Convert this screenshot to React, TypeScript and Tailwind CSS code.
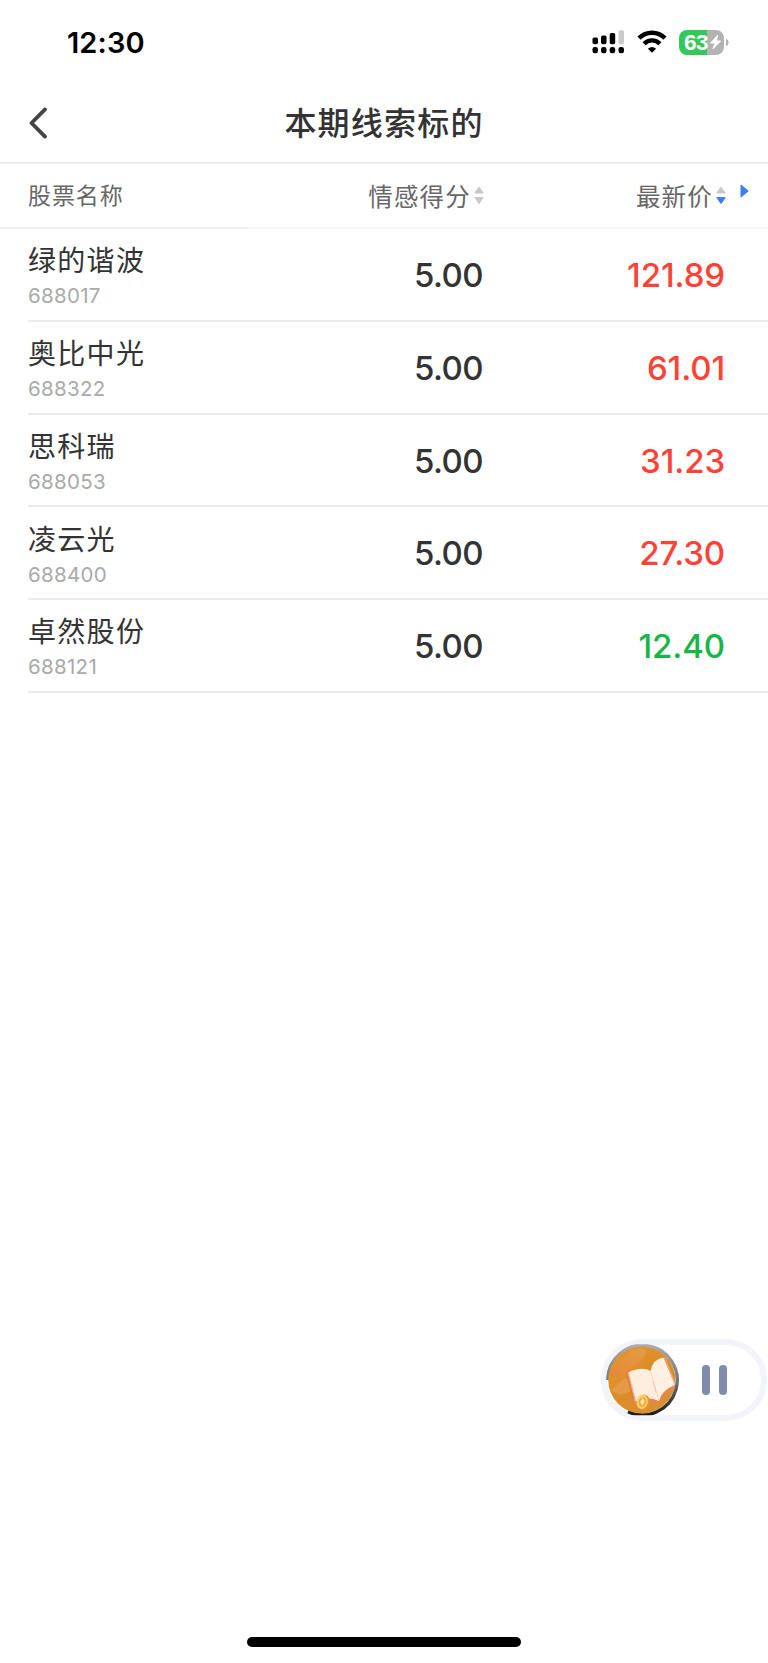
type Stock = { name: string; code: string; score: string; price: string; up: boolean };

const stocks: Stock[] = [
  { name: "绿的谐波", code: "688017", score: "5.00", price: "121.89", up: true },
  { name: "奥比中光", code: "688322", score: "5.00", price: "61.01", up: true },
  { name: "思科瑞", code: "688053", score: "5.00", price: "31.23", up: true },
  { name: "凌云光", code: "688400", score: "5.00", price: "27.30", up: true },
  { name: "卓然股份", code: "688121", score: "5.00", price: "12.40", up: false },
];

function SignalIcon() {
  return (
    <svg width="33" height="24" viewBox="0 0 33 24" className="block">
      <rect x="0.5" y="7.5" width="5.5" height="6.7" rx="1.8" />
      <rect x="9" y="5.5" width="5.5" height="8.7" rx="1.8" />
      <rect x="17.7" y="3" width="5.5" height="11.2" rx="1.8" />
      <rect x="26.5" y="0.3" width="5.5" height="13.9" rx="1.8" fill="#cbcbcb" />
      <rect x="0.5" y="17" width="5.5" height="6.3" rx="2.2" />
      <rect x="9" y="17" width="5.5" height="6.3" rx="2.2" />
      <rect x="17.7" y="17" width="5.5" height="6.3" rx="2.2" />
      <rect x="26.5" y="17" width="5.5" height="6.3" rx="2.2" />
    </svg>
  );
}

function WifiIcon() {
  return (
    <svg width="30" height="24" viewBox="0 0 30 24" className="block">
      <path d="M2 8.2a18.4 18.4 0 0 1 26 0" fill="none" stroke="#000" strokeWidth="4.5" />
      <path d="M7.1 13.8a11 11 0 0 1 15.8 0" fill="none" stroke="#000" strokeWidth="4.3" />
      <path d="M15 22.8 L10.9 18.8 Q15 15.2 19.1 18.8 Z" />
    </svg>
  );
}

function Battery() {
  return (
    <div className="flex items-center">
      <div className="flex h-[25px] w-[45px] items-center rounded-[8px] bg-[linear-gradient(90deg,#34c759_0_28px,#b3b3b3_28px)] pl-[5px]">
        <span className="w-[24.5px] font-['Liberation_Sans',sans-serif] text-[22.5px] leading-[25px] font-bold tracking-[-0.6px] text-white">
          63
        </span>
        <svg width="13" height="16" viewBox="0 0 13 16" className="block">
          <path
            d="M8.8 1 1.5 9h4.3L4 15 11.5 7H7.3z"
            fill="#fff"
            stroke="#fff"
            strokeWidth="1"
            strokeLinejoin="round"
          />
        </svg>
      </div>
      <svg width="5" height="9" viewBox="0 0 5 9" className="block">
        <path d="M2 0.5q2.6 1.4 2.6 4t-2.6 4z" fill="#b3b3b3" />
      </svg>
    </div>
  );
}

function SortIcon({ active = false }: { active?: boolean }) {
  return (
    <svg width="10" height="19" viewBox="0 0 10 19" className="block">
      <path d="M5 1 9.2 7H.8z" fill="#c8c8c8" stroke="#c8c8c8" strokeWidth="1" strokeLinejoin="round" />
      <path
        d="M5 17.6 9.2 11.6H.8z"
        fill={active ? "#3e7cff" : "#c8c8c8"}
        stroke={active ? "#3e7cff" : "#c8c8c8"}
        strokeWidth="1"
        strokeLinejoin="round"
      />
    </svg>
  );
}

function BookCover() {
  return (
    <svg width="74" height="74" viewBox="0 0 74 74" className="block">
      <defs>
        <linearGradient id="cover" x1="0" y1="0" x2="0.8" y2="1">
          <stop offset="0" stopColor="#e39a35" />
          <stop offset="0.55" stopColor="#dc8c28" />
          <stop offset="1" stopColor="#d59238" />
        </linearGradient>
        <linearGradient id="ring" x1="0" y1="0" x2="0" y2="1">
          <stop offset="0" stopColor="#a8adb1" />
          <stop offset="0.5" stopColor="#73777a" />
          <stop offset="1" stopColor="#191a1c" />
        </linearGradient>
        <linearGradient id="blob" x1="0" y1="1" x2="1" y2="0">
          <stop offset="0" stopColor="#e8823c" />
          <stop offset="1" stopColor="#e6a14a" />
        </linearGradient>
        <clipPath id="disc">
          <circle cx="36.8" cy="37" r="33.6" />
        </clipPath>
        <clipPath id="frame">
          <rect x="0" y="1.3" width="74" height="71" />
        </clipPath>
      </defs>
      <path
        d="M2.8 37A34.7 34.7 0 1 1 23 68.6"
        fill="none"
        stroke="url(#ring)"
        strokeWidth="3.4"
        clipPath="url(#frame)"
      />
      <g clipPath="url(#disc)">
        <rect width="74" height="74" fill="url(#cover)" />
        <path d="M5 27 28 7q16-4 12 5-4 7-22 19-8 4-13 2z" fill="url(#blob)" opacity="0.75" />
        <path d="M6 47 20 35l7 3 2 9-14 5z" fill="#e6a456" opacity="0.6" />
        <path d="M20.5 29 29 61l4 .5L25 28z" fill="#e7753f" />
        <path d="M59 13 71.5 44 69 46 56 18z" fill="#e9703b" />
        <path d="M28 61.5Q41 56 53 60.5 57 50 72 45l-1-4-18 13-24 3z" fill="#e98355" />
        <path d="M23 29.5Q37 23 45.5 28L54 58Q42 53 30 58.5z" fill="#ffeedd" />
        <path d="M45.5 28Q48 16 58.5 14.5L70 42Q57 47 54 58z" fill="#fff0e1" />
        <path d="M23 29.5 30.5 58M59.5 14.5 70.5 42" fill="none" stroke="#f5aa80" strokeWidth="1.2" />
        <path d="M48 38 51 49" fill="none" stroke="#f3c5aa" strokeWidth="1" />
        <ellipse cx="38.5" cy="59.5" rx="6.5" ry="8" fill="#ee9038" transform="rotate(12 38.5 59.5)" />
        <ellipse cx="37.2" cy="58.8" rx="5.6" ry="7.2" fill="#ffd468" transform="rotate(12 37.2 58.8)" />
        <ellipse cx="37.4" cy="58.8" rx="3.8" ry="5.2" fill="#f5a94b" transform="rotate(12 37.4 58.8)" />
        <path d="m37.8 54.6 1.5 3.8-1.8 4.3-2.2-3.8z" fill="#fff1a6" />
      </g>
    </svg>
  );
}

export default function App() {
  return (
    <div className="relative flex h-[1663px] w-[768px] flex-col overflow-hidden bg-white font-['Inter','Noto_Sans_CJK_SC',sans-serif] text-[#333]">
      <div className="flex h-[82px] shrink-0 items-start justify-between pt-[25px] pr-[39px] pl-[67px]">
        <div className="text-[29px] leading-[35px] font-semibold tracking-[0.1px] text-black">12:30</div>
        <div className="flex items-center pt-[4.5px]">
          <SignalIcon />
          <div className="ml-[12px]">
            <WifiIcon />
          </div>
          <div className="ml-[12px]">
            <Battery />
          </div>
        </div>
      </div>

      <header className="grid h-[82px] shrink-0 grid-cols-[1fr_auto_1fr] items-center border-b-2 border-[#ececec]">
        <svg width="20" height="32" viewBox="0 0 20 32" className="mt-[2px] ml-[28px] block">
          <path
            d="M17 2.4 3.5 16 17 29.6"
            fill="none"
            stroke="#444"
            strokeWidth="3.8"
            strokeLinecap="round"
            strokeLinejoin="round"
          />
        </svg>
        <h1 className="pt-[3px] text-[32px] leading-[45px] font-medium tracking-[1.2px]">本期线索标的</h1>
      </header>

      <div className="flex h-[65px] shrink-0 items-center text-[#666]">
        <div className="flex h-full w-[247px] items-center border-b-2 border-[#efefef] pt-[2px] pl-[28px] text-[23px] tracking-[0.9px]">
          股票名称
        </div>
        <div className="flex h-full flex-1 items-center border-b-2 border-[#f7f7f7] text-[24.5px]">
          <div className="flex w-[237px] items-center justify-end">
            <span className="mr-[3px] pt-[3px] tracking-[1.2px]">情感得分</span>
            <SortIcon />
          </div>
          <div className="flex w-[242px] items-center justify-end">
            <span className="mr-[3px] pt-[3px] tracking-[1.2px]">最新价</span>
            <SortIcon active />
          </div>
          <svg width="9" height="14" viewBox="0 0 9 14" className="mb-[9px] ml-[14px] block">
            <path d="M1 0.9 8.2 7 1 13.1z" fill="#3e7cff" stroke="#3e7cff" strokeWidth="1" strokeLinejoin="round" />
          </svg>
        </div>
      </div>

      <div className="flex flex-col pl-[28px]">
        {stocks.map((s) => (
          <div key={s.code} className="flex h-[92.75px] items-center border-b-2 border-[#ebebeb]">
            <div className="flex w-[219px] flex-col pt-[6px]">
              <span className="text-[28px] leading-[37px] tracking-[1.3px]">{s.name}</span>
              <span className="text-[20.5px] leading-[31px] tracking-[0.3px] text-[#aaa]">{s.code}</span>
            </div>
            <div className="w-[236px] pt-[1.5px] text-right text-[33px] leading-[40px] font-medium tracking-[-0.6px]">
              {s.score}
            </div>
            <div
              className={`w-[242px] pt-[1.5px] text-right text-[33px] leading-[40px] font-medium tracking-[-0.1px] ${s.up ? "text-[#ff4236]" : "text-[#19b548]"}`}
            >
              {s.price}
            </div>
          </div>
        ))}
      </div>

      <div className="absolute top-[1339px] left-[601px] flex h-[82px] w-[166px] items-center rounded-full border-[6px] border-[#f3f4fa] bg-white">
        <div className="-ml-[2px] shrink-0">
          <BookCover />
        </div>
        <div className="ml-[23px] flex gap-[9px]">
          <div className="h-[30px] w-[8px] rounded-full bg-[#7e8bac]" />
          <div className="h-[30px] w-[8px] rounded-full bg-[#7e8bac]" />
        </div>
      </div>

      <div className="mt-auto mb-[16px] h-[10px] w-[274px] self-center rounded-full bg-black" />
    </div>
  );
}
